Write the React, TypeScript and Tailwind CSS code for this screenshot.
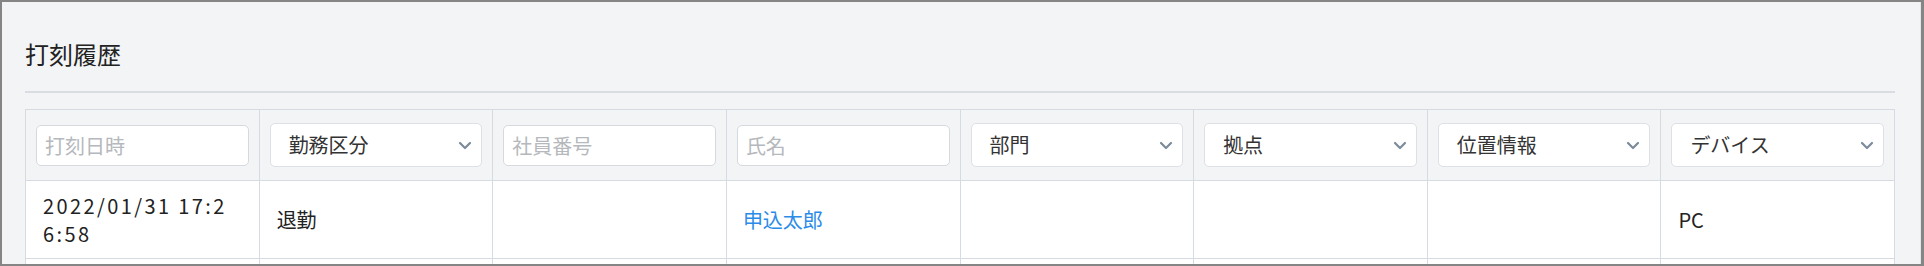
import React from "react";

const Chevron = () => (
  <svg width="14" height="9" viewBox="0 0 14 9" fill="none" className="shrink-0">
    <path d="M2 2l5 5 5-5" stroke="#7c8b9b" strokeWidth="2.2" strokeLinecap="round" strokeLinejoin="round" />
  </svg>
);

const TextFilter = ({ placeholder }: { placeholder: string }) => (
  <input
    placeholder={placeholder}
    className="block w-full h-[41px] rounded-[5px] border border-[#d6dade] bg-white px-[8px] text-[20px] text-[#333] placeholder:text-[#b5b8bc] outline-none"
  />
);

const SelectFilter = ({ label }: { label: string }) => (
  <div className="flex h-[44px] w-full items-center justify-between rounded-[5px] border border-[#dde0e4] bg-white pl-[18px] pr-[9px] text-[20px] text-[#333]">
    <span>{label}</span>
    <Chevron />
  </div>
);

const filters: { kind: "text" | "select"; label: string }[] = [
  { kind: "text", label: "打刻日時" },
  { kind: "select", label: "勤務区分" },
  { kind: "text", label: "社員番号" },
  { kind: "text", label: "氏名" },
  { kind: "select", label: "部門" },
  { kind: "select", label: "拠点" },
  { kind: "select", label: "位置情報" },
  { kind: "select", label: "デバイス" },
];

export default function App() {
  return (
    <div
      className="w-[1924px] h-[266px] overflow-hidden border-2 border-r-[3px] border-[#858585] bg-[#f3f4f6]"
      style={{ fontFamily: '"Noto Sans CJK JP", "Noto Sans", sans-serif' }}
    >
      <div className="h-full border-r border-[#e4e6e9] pl-[23px] pr-[25px] pt-[36px]">
        <h1 className="text-[24px] leading-[32px] text-[#222]">打刻履歴</h1>
        <div className="mt-[21px] h-[2px] bg-[#d9dde2]" />
        <table className="mt-[16px] w-full table-fixed border-collapse">
          <thead>
            <tr className="h-[71px]">
              {filters.map((f) => (
                <th key={f.label} className="border border-[#d6dbe1] px-[10px] font-normal">
                  {f.kind === "text" ? <TextFilter placeholder={f.label} /> : <SelectFilter label={f.label} />}
                </th>
              ))}
            </tr>
          </thead>
          <tbody className="bg-white text-[20px] leading-[28px] text-[#222]">
            <tr className="h-[78px]">
              <td className="border border-[#d6dbe1] pl-[17px] pr-[24px] break-all tracking-[2.4px]">2022/01/31 17:26:58</td>
              <td className="border border-[#d6dbe1] px-[17px]">退勤</td>
              <td className="border border-[#d6dbe1] px-[17px]"></td>
              <td className="border border-[#d6dbe1] px-[16px] text-[#2b8be8]">申込太郎</td>
              <td className="border border-[#d6dbe1] px-[17px]"></td>
              <td className="border border-[#d6dbe1] px-[17px]"></td>
              <td className="border border-[#d6dbe1] px-[17px]"></td>
              <td className="border border-[#d6dbe1] px-[17px]">PC</td>
            </tr>
            <tr className="h-[78px]">
              {filters.map((f) => (
                <td key={f.label} className="border border-[#d6dbe1]"></td>
              ))}
            </tr>
          </tbody>
        </table>
      </div>
    </div>
  );
}
